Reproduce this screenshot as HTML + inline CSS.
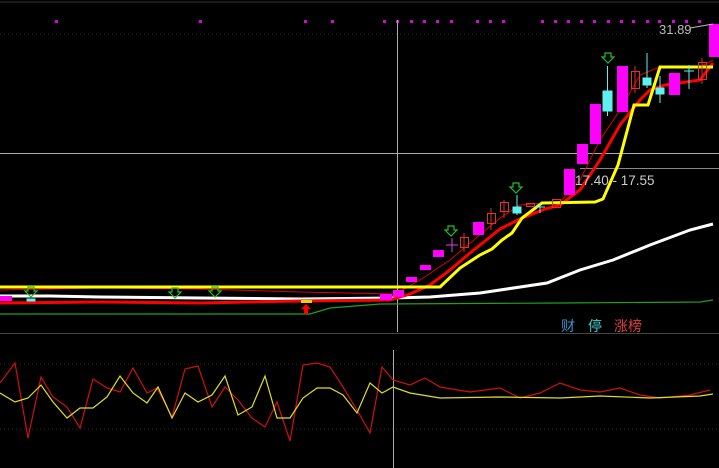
<!DOCTYPE html><html><head><meta charset="utf-8"><style>body{margin:0;background:#000;overflow:hidden}svg{display:block}</style></head><body>
<svg width="719" height="468" viewBox="0 0 719 468" xmlns="http://www.w3.org/2000/svg" font-family="Liberation Sans, Noto Sans CJK SC, sans-serif">
<rect width="719" height="468" fill="#000"/>
<line x1="0" y1="2" x2="719" y2="2" stroke="#333" stroke-width="1"/>
<g stroke="#2a2a2a" stroke-dasharray="1,3"><line x1="0" y1="34" x2="719" y2="34"/><line x1="0" y1="364" x2="719" y2="364"/><line x1="0" y1="429" x2="719" y2="429"/></g>
<g fill="#e000e0">
<rect x="55" y="20" width="3" height="3"/><rect x="199" y="20" width="3" height="3"/><rect x="304" y="20" width="3" height="3"/><rect x="331" y="20" width="3" height="3"/><rect x="383" y="20" width="3" height="3"/><rect x="396" y="20" width="3" height="3"/><rect x="410" y="20" width="3" height="3"/><rect x="423" y="20" width="3" height="3"/><rect x="436" y="20" width="3" height="3"/><rect x="450" y="20" width="3" height="3"/><rect x="476" y="20" width="3" height="3"/><rect x="489" y="20" width="3" height="3"/><rect x="502" y="20" width="3" height="3"/><rect x="541" y="20" width="3" height="3"/><rect x="554" y="20" width="3" height="3"/><rect x="567" y="20" width="3" height="3"/><rect x="580" y="20" width="3" height="3"/><rect x="593" y="20" width="3" height="3"/><rect x="607" y="20" width="3" height="3"/><rect x="620" y="20" width="3" height="3"/><rect x="632" y="20" width="3" height="3"/><rect x="646" y="20" width="3" height="3"/><rect x="658" y="20" width="3" height="3"/><rect x="672" y="20" width="3" height="3"/><rect x="685" y="20" width="3" height="3"/><rect x="698" y="20" width="3" height="3"/>
</g>
<line x1="397.5" y1="20" x2="397.5" y2="332" stroke="#aaa"/>
<line x1="393.5" y1="350" x2="393.5" y2="468" stroke="#aaa"/>
<line x1="0" y1="153.5" x2="719" y2="153.5" stroke="#aaa"/>
<line x1="580" y1="168.5" x2="719" y2="168.5" stroke="#888"/>
<line x1="0" y1="333.5" x2="719" y2="333.5" stroke="#444"/>
<polyline fill="none" stroke="#1fa01f" stroke-width="1.2" points="0,314 310,314 330,308 380,304 560,303 700,302 713,300"/>
<polyline fill="none" stroke="#fff" stroke-width="3" points="0,296 50,296 100,297 200,298 300,299 390,298 430,297 480,293 547,283 580,270 613,260 650,245 690,230 713,224"/>
<polyline fill="none" stroke="#f00" stroke-width="3" points="0,303 100,302 200,303 300,301 390,300 410,294 430,285 450,270 470,253 500,229 520,219 545,209 560,205 580,190 600,160 620,125 640,100 650,90 665,85 700,80 713,63"/>
<polyline fill="none" stroke="#d00" stroke-width="1" points="0,290 100,288 200,289 300,292 395,294 420,280 450,260 500,218 520,205 560,202 580,180 600,140 620,110 640,75 660,67 700,67 713,60"/>
<polyline fill="none" stroke="#ff0" stroke-width="3" points="0,287 440,287 460,268 480,255 492,249 502,240 512,233 522,218 542,203 595,202 603,199 618,165 634,105 648,105 660,67 713,67"/>
<g stroke="#e03030" fill="none" stroke-width="1">
<line x1="464" y1="233" x2="464" y2="252"/><rect x="460.5" y="237.5" width="8" height="10"/>
<rect x="487.5" y="213.5" width="8" height="10"/><line x1="491" y1="208" x2="491" y2="230"/>
<rect x="500.5" y="202.5" width="8" height="9"/><line x1="504" y1="200" x2="504" y2="218"/>
<rect x="526.5" y="203.5" width="8" height="3"/>
<rect x="552.5" y="199.5" width="8" height="8"/>
<rect x="631.5" y="71.5" width="8" height="17"/><line x1="635" y1="66" x2="635" y2="93"/>
<rect x="698.5" y="62.5" width="8" height="17"/><line x1="702" y1="58" x2="702" y2="84"/>
</g>
<g fill="#f0f">
<rect x="0" y="296" width="12" height="5"/><rect x="393" y="290" width="11" height="7"/><rect x="406" y="277" width="11" height="5"/><rect x="420" y="265" width="11" height="5"/><rect x="433" y="250" width="11" height="7"/>
<rect x="473" y="222" width="11" height="13"/><rect x="564" y="169" width="11" height="26"/><rect x="577" y="144" width="11" height="20"/><rect x="590" y="104" width="11" height="40"/><rect x="617" y="66" width="11" height="46"/><rect x="669" y="73" width="11" height="22"/><rect x="709" y="24" width="10" height="33"/>
<rect x="380" y="294" width="12" height="6"/>
</g>
<g stroke="#e040e0"><line x1="446" y1="245" x2="458" y2="245"/><line x1="452" y1="238" x2="452" y2="252"/></g>
<g fill="#60f0f0" stroke="#60f0f0">
<rect x="513" y="207" width="8" height="6"/><line x1="517" y1="195" x2="517" y2="215"/>
<rect x="603" y="91" width="9" height="20"/><line x1="607.5" y1="66" x2="607.5" y2="116"/>
<rect x="643" y="78" width="8" height="7"/><line x1="647" y1="53" x2="647" y2="88"/>
<rect x="656" y="88" width="8" height="6"/><line x1="660" y1="76" x2="660" y2="103"/>
<line x1="535" y1="207" x2="545" y2="207"/><line x1="540" y1="203" x2="540" y2="213"/>
<line x1="684" y1="71" x2="694" y2="71"/><line x1="689" y1="65" x2="689" y2="89"/>
<rect x="27" y="299" width="8" height="2"/>
</g>
<rect x="301" y="300" width="11" height="3" fill="#f0d000"/>
<path d="M306 304 L311 309 L308 309 L308 314 L304 314 L304 309 L301 309 Z" fill="#f00"/>
<g fill="none" stroke="#20c020" stroke-width="1.2">
<path d="M448 226 h6 v4 h3 l-6 6 l-6 -6 h3 z"/>
<path d="M513 183 h6 v4 h3 l-6 6 l-6 -6 h3 z"/>
<path d="M605 53 h6 v4 h3 l-6 6 l-6 -6 h3 z"/>
<path d="M28 287 h6 v4 h3 l-6 6 l-6 -6 h3 z"/>
<path d="M172 288 h6 v4 h3 l-6 6 l-6 -6 h3 z"/>
<path d="M212 287 h6 v4 h3 l-6 6 l-6 -6 h3 z"/>
</g>
<text x="659" y="34" font-size="13" fill="#bbb">31.89</text>
<line x1="690" y1="28" x2="713" y2="24" stroke="#bbb"/>
<text x="575" y="185" font-size="13.5" fill="#ccc">17.40 - 17.55</text>
<text x="561" y="331" font-size="14" fill="#3a90d0">财</text>
<text x="588" y="331" font-size="14" fill="#40d0d0">停</text>
<text x="614" y="331" font-size="14" fill="#e04040">涨榜</text>
<polyline fill="none" stroke="#d01010" stroke-width="1.2" points="0,383 15,363 28,438 41,377 53,397 67,407 80,428 93,379 107,388 120,392 133,368 147,393 157,388 172,417 185,369 198,366 212,407 225,387 238,400 252,418 265,427 277,402 290,441 303,365 317,363 330,367 343,387 357,410 370,433 382,367 393,380 410,385 425,378 440,387 470,392 500,388 520,398 540,393 560,383 580,390 600,392 620,388 640,395 660,398 690,395 710,390"/>
<polyline fill="none" stroke="#e0e020" stroke-width="1.2" points="0,393 15,402 28,398 41,385 53,402 67,418 80,408 93,408 107,397 120,376 133,393 147,403 158,387 172,418 185,393 198,402 212,395 225,376 238,415 252,407 265,376 277,418 290,418 303,398 317,388 330,388 343,395 357,413 370,383 382,393 393,387 410,393 440,398 500,397 560,398 600,396 650,398 700,396 713,394"/>
</svg></body></html>
